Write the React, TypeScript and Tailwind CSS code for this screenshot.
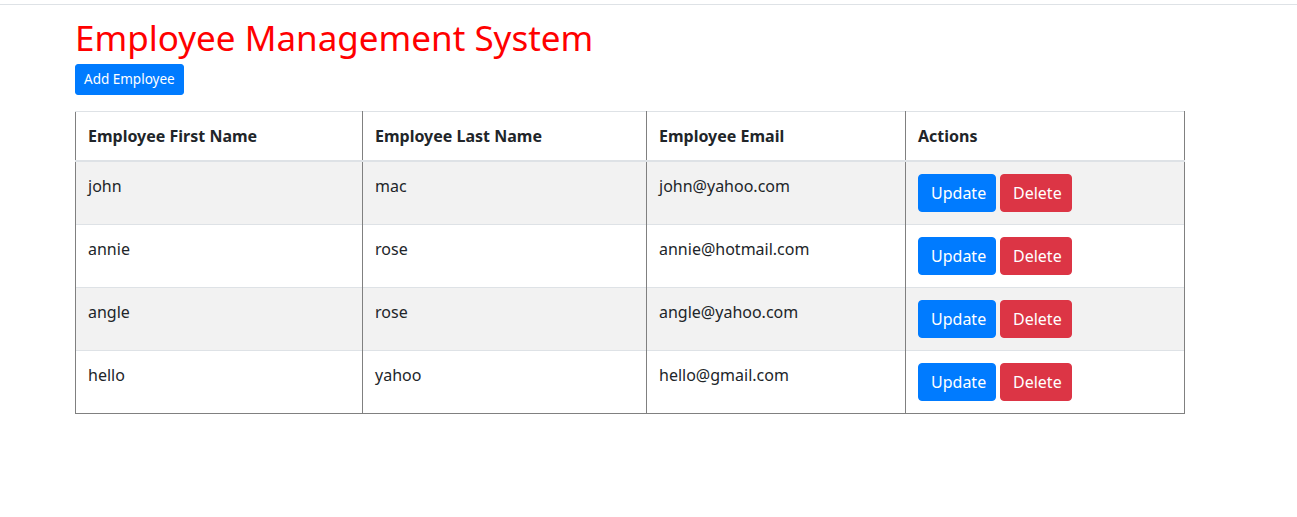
import React from "react";

type Employee = {
    firstName: string;
    lastName: string;
    email: string;
};

const employees: Employee[] = [
    { firstName: "john", lastName: "mac", email: "john@yahoo.com" },
    { firstName: "annie", lastName: "rose", email: "annie@hotmail.com" },
    { firstName: "angle", lastName: "rose", email: "angle@yahoo.com" },
    { firstName: "hello", lastName: "yahoo", email: "hello@gmail.com" },
];

const font = { fontFamily: '"Noto Sans", "Open Sans", sans-serif' };

const App: React.FC = () => {
    return (
        <div className="min-h-[517px] bg-white text-[#212529]" style={font}>
            <div className="h-[4px]" />
            <div className="border-t border-[#dee2e6]" />
            <div className="ml-[75px] w-[1110px]">
                <h1 className="text-[35px] leading-[40px] text-[#ff0000] mt-[13px] mb-[6px]">
                    Employee Management System
                </h1>
                <button className="bg-[#007bff] text-white text-[13.5px] leading-[21px] px-2 py-1 rounded-[3px] border border-[#007bff]">
                    Add Employee
                </button>
                <table className="w-full mt-[16px] border-collapse text-[16px] leading-6">
                    <thead>
                        <tr>
                            <th className="w-[287px] text-left font-bold px-3 pt-3 pb-[12px] border-t border-[#dee2e6] border-b-2 border-b-[#dee2e6] border-l border-l-[#808080] border-r border-r-[#808080]">
                                Employee First Name
                            </th>
                            <th className="w-[284px] text-left font-bold px-3 pt-3 pb-[12px] border-t border-[#dee2e6] border-b-2 border-b-[#dee2e6] border-r border-r-[#808080]">
                                Employee Last Name
                            </th>
                            <th className="w-[259px] text-left font-bold px-3 pt-3 pb-[12px] border-t border-[#dee2e6] border-b-2 border-b-[#dee2e6] border-r border-r-[#808080]">
                                Employee Email
                            </th>
                            <th className="text-left font-bold px-3 pt-3 pb-[12px] border-t border-[#dee2e6] border-b-2 border-b-[#dee2e6] border-r border-r-[#808080]">
                                Actions
                            </th>
                        </tr>
                    </thead>
                    <tbody>
                        {employees.map((e, i) => (
                            <tr
                                key={e.email}
                                className={i % 2 === 0 ? "bg-[#f2f2f2]" : "bg-white"}
                            >
                                <td className="align-top p-3 border-t border-t-[#dee2e6] border-l border-l-[#808080] border-r border-r-[#808080]">
                                    {e.firstName}
                                </td>
                                <td className="align-top p-3 border-t border-t-[#dee2e6] border-r border-r-[#808080]">
                                    {e.lastName}
                                </td>
                                <td className="align-top p-3 border-t border-t-[#dee2e6] border-r border-r-[#808080]">
                                    {e.email}
                                </td>
                                <td className="align-top p-3 border-t border-t-[#dee2e6] border-r border-r-[#808080]">
                                    <div className="flex gap-1">
                                        <button className="bg-[#007bff] text-white px-3 py-1.5 rounded border border-[#007bff] w-[78px]">
                                            Update
                                        </button>
                                        <button className="bg-[#dc3545] text-white px-3 py-1.5 rounded border border-[#dc3545] w-[72px]">
                                            Delete
                                        </button>
                                    </div>
                                </td>
                            </tr>
                        ))}
                        <tr>
                            <td colSpan={4} className="border-t border-t-[#808080] p-0 h-0" />
                        </tr>
                    </tbody>
                </table>
            </div>
        </div>
    );
};

export default App;
